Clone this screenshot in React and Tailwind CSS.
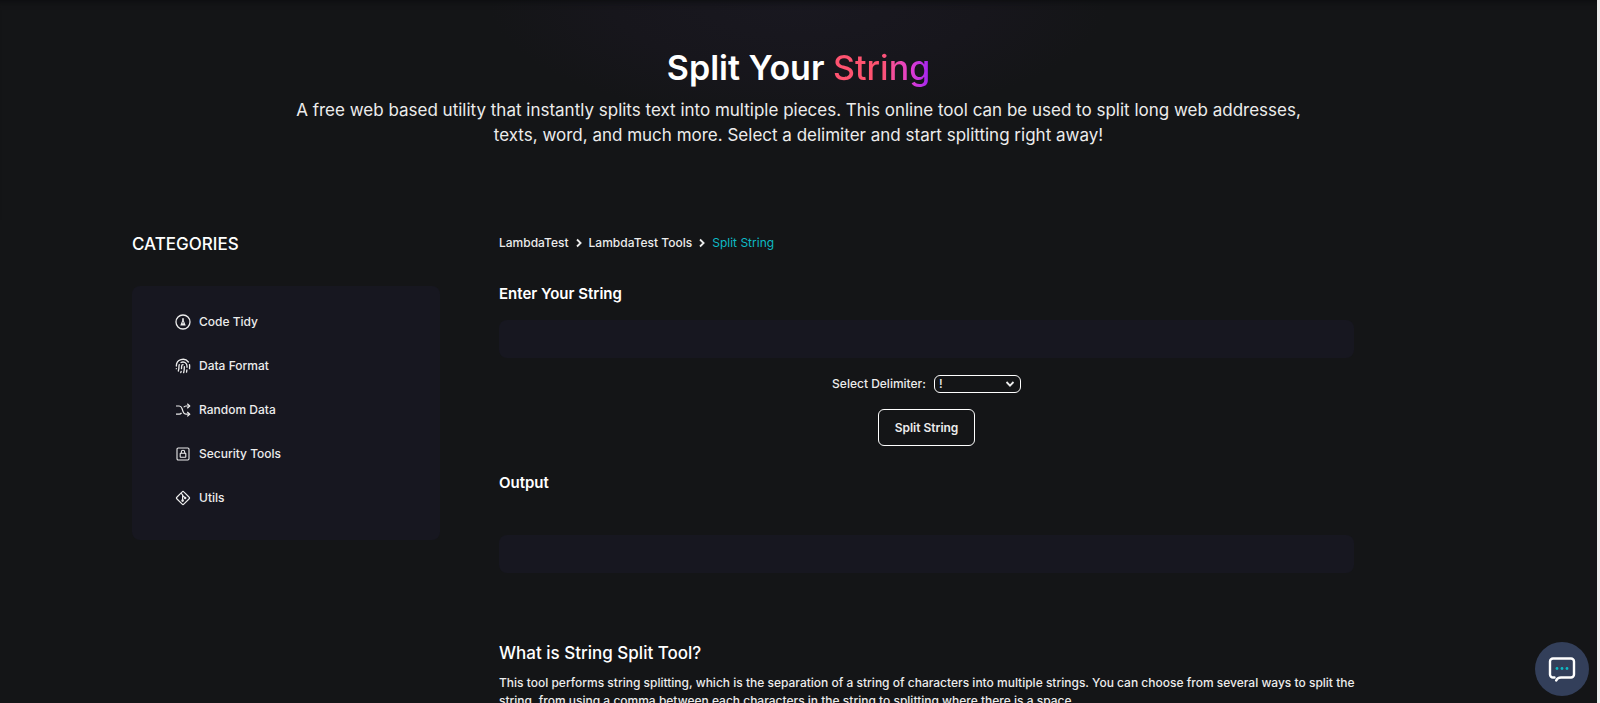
import { useState } from 'react';
import { Fingerprint } from 'lucide-react';

const DELIMITERS = ['!', ',', ';', ':', '-', '|', '/'];

function TidyIcon() {
  return (
    <svg viewBox="0 0 16 16" className="w-4 h-4" fill="none" stroke="currentColor">
      <circle cx="8" cy="8" r="7" strokeWidth="1.3" />
      <path d="M7.2 4.3h1.6v2.2l1.9 5H5.3l1.9-5z" fill="currentColor" stroke="none" />
      <path d="M8 7.8v1.8" stroke="#171720" strokeWidth="0.7" />
    </svg>
  );
}

function ShuffleIcon() {
  return (
    <svg viewBox="0 0 16 16" className="w-4 h-4" fill="none" stroke="currentColor" strokeWidth="1.2">
      <path d="M1 4h3.2c1.5 0 2.3 1.1 2.8 2.5l1 3c.5 1.4 1.3 2.7 2.8 2.7h3.7M1 12.2h3.2c1 0 1.8-.5 2.3-1.3M8.7 5.300C9.200 4.500 10 4 11 4h3.500" />
      <path d="M12.3 1.800L14.700 4l-2.400 2.200M12.300 10l2.400 2.200-2.400 2.200" />
    </svg>
  );
}

function LockIcon() {
  return (
    <svg viewBox="0 0 16 16" className="w-4 h-4" fill="none" stroke="currentColor" strokeWidth="1.1">
      <rect x="2" y="2" width="12" height="12" rx="1.2" />
      <rect x="5.2" y="7.2" width="5.6" height="4" rx="0.4" />
      <path d="M6.3 7.2V6a1.7 1.7 0 0 1 3.4 0v1.2" />
    </svg>
  );
}

function UtilsIcon() {
  return (
    <svg viewBox="0 0 16 16" className="w-4 h-4" fill="none" stroke="currentColor" strokeWidth="1.2">
      <path d="M7.2 1.8a1.1 1.1 0 0 1 1.6 0l5.4 5.4a1.1 1.1 0 0 1 0 1.6l-5.4 5.4a1.1 1.1 0 0 1-1.6 0L1.8 8.8a1.1 1.1 0 0 1 0-1.6z" />
      <path d="M6 3.2l1.6 1.7v5.6M7.6 5.4L10.2 8" />
      <circle cx="7.6" cy="10.6" r="0.7" fill="currentColor" />
      <circle cx="10.2" cy="8" r="0.6" fill="currentColor" />
    </svg>
  );
}

const categories = [
  { name: 'Code Tidy', icon: <TidyIcon /> },
  { name: 'Data Format', icon: <Fingerprint className="w-4 h-4" strokeWidth={2} /> },
  { name: 'Random Data', icon: <ShuffleIcon /> },
  { name: 'Security Tools', icon: <LockIcon /> },
  { name: 'Utils', icon: <UtilsIcon /> },
];

function Chevron({ className }) {
  return (
    <svg viewBox="0 0 8 10" className={className} fill="none" stroke="currentColor" strokeWidth="1.8">
      <path d="M2 1.5L5.600 5 2 8.500" />
    </svg>
  );
}

export default function App() {
  const [text, setText] = useState('');
  const [delimiter, setDelimiter] = useState('!');
  const [output, setOutput] = useState('');

  const splitString = () => setOutput(text.split(delimiter).join('\n'));

  return (
    <div className="h-screen overflow-y-auto [scrollbar-width:none] bg-[#141517] border-r-[3px] border-[#ececec] text-[#ececec] font-['Inter',sans-serif]">
      <header className="pt-12 pb-[72px] text-center bg-[radial-gradient(ellipse_310px_120px_at_50%_0,#191820,#17161c_60%,#141517)] shadow-[inset_0_8px_6px_-6px_#0d0e10]">
        <h1 className="text-[34px] leading-10 font-semibold text-white">
          Split Your{' '}
          <span className="font-medium bg-linear-to-r from-[#ff5370] from-50% via-[#e23ad0] via-80% to-[#a01cf0] bg-clip-text text-transparent">
            String
          </span>
        </h1>
        <p className="max-w-[1016px] mx-auto mt-[10px] text-[17px] leading-[25px]">
          A free web based utility that instantly splits text into multiple pieces. This online tool can be used to split
          long web addresses, texts, word, and much more. Select a delimiter and start splitting right away!
        </p>
      </header>

      <div className="max-w-[1333px] mx-auto flex items-start gap-[59px]">
        <aside className="w-[308px] shrink-0 pt-3">
          <h2 className="text-[17px] leading-6 font-medium text-white">CATEGORIES</h2>
          <nav className="mt-[30px] px-[43px] pt-[14px] pb-5 rounded-lg bg-[#171720]">
            {categories.map((cat) => (
              <a key={cat.name} href="#" className="flex items-center gap-2 h-11 text-xs font-medium">
                {cat.icon}
                {cat.name}
              </a>
            ))}
          </nav>
        </aside>

        <main className="flex-1 max-w-[855px] pt-[15px]">
          <nav className="flex items-center gap-[6px] text-xs leading-4 font-medium">
            <a href="#">LambdaTest</a>
            <Chevron className="w-2 h-[10px]" />
            <a href="#">LambdaTest Tools</a>
            <Chevron className="w-2 h-[10px]" />
            <span className="font-normal text-[#0ebac5]">Split String</span>
          </nav>

          <label htmlFor="source" className="block mt-[31px] text-[15px] leading-6 font-semibold text-white">
            Enter Your String
          </label>
          <input
            id="source"
            value={text}
            onChange={(e) => setText(e.target.value)}
            className="block w-full h-[38px] mt-[14px] px-3 rounded-lg bg-[#171720] text-xs outline-none"
          />

          <div className="flex flex-col items-center mt-[17px]">
            <div className="flex items-center gap-2 text-xs font-medium">
              <label htmlFor="delimiter">Select Delimiter:</label>
              <div className="relative">
                <select
                  id="delimiter"
                  value={delimiter}
                  onChange={(e) => setDelimiter(e.target.value)}
                  className="block w-[87px] h-[18px] pl-1 appearance-none rounded-md border border-white bg-[#141517] text-xs leading-4"
                >
                  {DELIMITERS.map((d) => (
                    <option key={d}>{d}</option>
                  ))}
                </select>
                <Chevron className="absolute right-[7px] top-1 w-2 h-[10px] rotate-90 pointer-events-none" />
              </div>
            </div>
            <button
              type="button"
              onClick={splitString}
              className="mt-4 h-[37px] px-4 rounded-md border border-white text-xs font-semibold"
            >
              Split String
            </button>
          </div>

          <label htmlFor="output" className="block mt-[25px] text-[15px] leading-6 font-semibold text-white">
            Output
          </label>
          <textarea
            id="output"
            readOnly
            value={output}
            className="block w-full h-[38px] mt-10 px-3 py-2 resize-none rounded-lg bg-[#171720] text-xs outline-none"
          />

          <section className="mt-[68px] pb-10 -mr-4">
            <h2 className="text-[17px] leading-6 font-medium text-white">What is String Split Tool?</h2>
            <p className="mt-[9px] text-xs leading-[18px] font-medium">
              This tool performs string splitting, which is the separation of a string of characters into multiple
              strings. You can choose from several ways to split the string, from using a comma between each characters
              in the string to splitting where there is a space.
            </p>
          </section>
        </main>
      </div>

      <button
        type="button"
        aria-label="Chat"
        className="fixed right-[11px] bottom-[7px] w-[54px] h-[54px] rounded-full bg-[#333f5a] flex items-center justify-center"
      >
        <svg viewBox="0 0 28 26" className="w-7 h-[26px]" fill="none">
          <path
            d="M6.5 21.5H5a3 3 0 0 1-3-3v-13a3 3 0 0 1 3-3h18a3 3 0 0 1 3 3v13a3 3 0 0 1-3 3H13c-2.500 0-4 1-4.800 3"
            stroke="#fff"
            strokeWidth="2.4"
            strokeLinecap="round"
          />
          <g fill="#0ebac5">
            <circle cx="9" cy="12.5" r="1.4" />
            <circle cx="14" cy="12.5" r="1.4" />
            <circle cx="19" cy="12.5" r="1.4" />
          </g>
        </svg>
      </button>
    </div>
  );
}
